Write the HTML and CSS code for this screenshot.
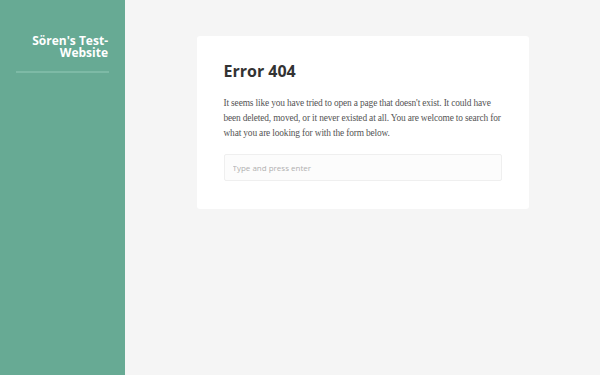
FILE: index.html
```html
<html lang="en">
  <head>
    <meta charset="UTF-8" />
    <meta name="viewport" content="width=device-width, initial-scale=1.0" />
    <title>Page not found</title>
    <link rel="stylesheet" href="styles.css">
  </head>

  <body>
    <div class="layout">
      <aside class="sidebar">
        <h1 class="sidebar__title">Sören's Test-Website</h1>
        <hr class="sidebar__rule" />
      </aside>
      <main class="content">
        <section class="card">
          <h2 class="card__heading">Error 404</h2>
          <p class="card__text">
            It seems like you have tried to open a page that doesn't exist. It
            could have been deleted, moved, or it never existed at all. You are
            welcome to search for what you are looking for with the form below.
          </p>
          <form class="search">
            <input class="search__input" type="search" placeholder="Type and press enter" />
          </form>
        </section>
      </main>
    </div>
  </body>
</html>
```

FILE: styles.css
```css
* {
  box-sizing: border-box;
}

body {
  margin: 0;
  background-color: #f5f5f5;
}

.layout {
  display: flex;
  min-height: 375px;
}

.sidebar {
  width: 125px;
  flex-shrink: 0;
  background-color: #67aa94;
  padding: 35px 16px 0 16px;
}

.sidebar__title {
  margin: 0 1px 0 0;
  font-family: "Open Sans", sans-serif;
  font-weight: 700;
  font-size: 12px;
  line-height: 12px;
  color: #fff;
  text-align: right;
}

.sidebar__rule {
  margin: 12px 0 0 0;
  border: 0;
  height: 2px;
  background-color: #7dbaa6;
}

.content {
  flex: 1;
  display: flex;
  justify-content: center;
  align-items: flex-start;
  padding-top: 36px;
}

.card {
  width: 332px;
  background-color: #fff;
  border-radius: 3px;
  padding: 24px 27px 28px 27px;
}

.card__heading {
  margin: 0;
  font-family: "Open Sans", sans-serif;
  font-weight: 700;
  font-size: 16px;
  line-height: 22px;
  color: #333;
}

.card__text {
  margin: 14px -6px 0 0;
  font-family: "Liberation Serif", serif;
  font-size: 9.4px;
  letter-spacing: -0.15px;
  line-height: 15px;
  color: #555;
}

.search {
  margin: 13px 0 0 0;
}

.search__input {
  display: block;
  width: 100%;
  height: 27px;
  padding: 0 8px;
  border: 1px solid #efefef;
  border-radius: 2px;
  background-color: #fcfcfc;
  font-family: "Open Sans", sans-serif;
  font-size: 8px;
  color: #555;
  outline: none;
}

.search__input::placeholder {
  color: #b0b0b0;
}
```
